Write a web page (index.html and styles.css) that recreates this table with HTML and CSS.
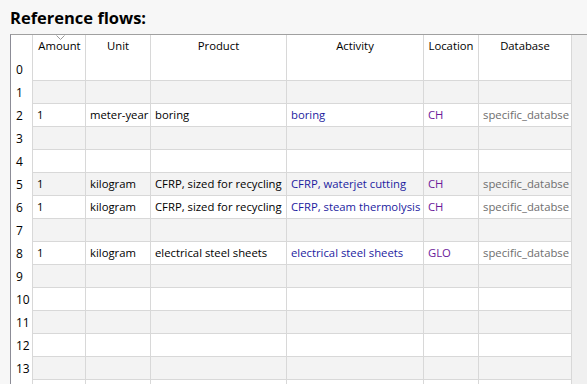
FILE: index.html
```html
<!DOCTYPE html>
<html lang="en">
<head>
    <meta charset="UTF-8">
    <title>Reference flows</title>
    <link rel="stylesheet" href="styles.css">
</head>
<body>
    <h1>Reference flows:</h1>
    <div class="frame">
        <div class="row-header">
            <div class="corner"></div>
            <div class="rh">0</div>
            <div class="rh">1</div>
            <div class="rh">2</div>
            <div class="rh">3</div>
            <div class="rh">4</div>
            <div class="rh">5</div>
            <div class="rh">6</div>
            <div class="rh">7</div>
            <div class="rh">8</div>
            <div class="rh">9</div>
            <div class="rh">10</div>
            <div class="rh">11</div>
            <div class="rh">12</div>
            <div class="rh">13</div>
        </div>
        <div class="grid">
            <div class="th sorted">Amount
                <svg class="sort" width="9" height="5" viewBox="0 0 9 5"><polyline points="0.5,0.5 4.5,4.5 8.5,0.5" fill="none" stroke="#9a9a9a" stroke-width="1"/></svg>
            </div>
            <div class="th">Unit</div>
            <div class="th">Product</div>
            <div class="th">Activity</div>
            <div class="th">Location</div>
            <div class="th">Database</div>

            <div class="td alt"></div><div class="td alt"></div><div class="td alt"></div><div class="td alt"></div><div class="td alt"></div><div class="td alt"></div>

            <div class="td">1</div><div class="td">meter-year</div><div class="td">boring</div><div class="td act">boring</div><div class="td loc">CH</div><div class="td db">specific_databse</div>

            <div class="td alt"></div><div class="td alt"></div><div class="td alt"></div><div class="td alt"></div><div class="td alt"></div><div class="td alt"></div>

            <div class="td"></div><div class="td"></div><div class="td"></div><div class="td"></div><div class="td"></div><div class="td"></div>

            <div class="td alt">1</div><div class="td alt">kilogram</div><div class="td alt">CFRP, sized for recycling</div><div class="td alt act">CFRP, waterjet cutting</div><div class="td alt loc">CH</div><div class="td alt db">specific_databse</div>

            <div class="td">1</div><div class="td">kilogram</div><div class="td">CFRP, sized for recycling</div><div class="td act">CFRP, steam thermolysis</div><div class="td loc">CH</div><div class="td db">specific_databse</div>

            <div class="td alt"></div><div class="td alt"></div><div class="td alt"></div><div class="td alt"></div><div class="td alt"></div><div class="td alt"></div>

            <div class="td">1</div><div class="td">kilogram</div><div class="td">electrical steel sheets</div><div class="td act">electrical steel sheets</div><div class="td loc">GLO</div><div class="td db">specific_databse</div>

            <div class="td alt"></div><div class="td alt"></div><div class="td alt"></div><div class="td alt"></div><div class="td alt"></div><div class="td alt"></div>

            <div class="td"></div><div class="td"></div><div class="td"></div><div class="td"></div><div class="td"></div><div class="td"></div>

            <div class="td alt"></div><div class="td alt"></div><div class="td alt"></div><div class="td alt"></div><div class="td alt"></div><div class="td alt"></div>

            <div class="td"></div><div class="td"></div><div class="td"></div><div class="td"></div><div class="td"></div><div class="td"></div>

            <div class="td alt"></div><div class="td alt"></div><div class="td alt"></div><div class="td alt"></div><div class="td alt"></div><div class="td alt"></div>

            <div class="td"></div><div class="td"></div><div class="td"></div><div class="td"></div><div class="td"></div><div class="td"></div>
        </div>
    </div>
</body>
</html>
```

FILE: styles.css
```css
body {
    margin: 0px;
    padding: 0px;
    height: 384px;
    overflow: hidden;
    background: #f7f7f7;
    font-family: 'Open Sans', 'Liberation Sans', sans-serif;
    font-size: 11.3px;
    color: #000;
}

h1 {
    font-size: 16.5px;
    font-weight: 700;
    margin: 0px;
    padding: 6px 0px 0px 10px;
    height: 28px;
    line-height: 24px;
}

/* テーブル枠 */
.frame {
    display: flex;
    align-items: flex-start;
    margin-left: 10px;
    height: 350px;
    border-top: 1px solid #a0a0a0;
    border-left: 1px solid #8c8c96;
    background: #f0f0f0;
}

/* 行ヘッダ */
.row-header {
    width: 21px;
    flex: 0 0 21px;
    align-self: stretch;
    background: #fff;
    border-right: 1px solid #d8d8d8;
}
.corner {
    height: 23px;
}
.rh {
    height: 23px;
    line-height: 24px;
    padding-left: 5px;
    font-size: 12px;
}

/* セル */
.grid {
    display: grid;
    grid-template-columns: 53px 65px 136px 137px 55px 93px;
    grid-template-rows: 46px;
    grid-auto-rows: 23px;
    align-content: start;
}
.th, .td {
    box-sizing: border-box;
    border-right: 1px solid #d8d8d8;
    border-bottom: 1px solid #d8d8d8;
    background: #fff;
    white-space: nowrap;
    overflow: hidden;
}
.th {
    text-align: center;
    padding-top: 3px;
    line-height: 16px;
    position: relative;
}
.th.sorted {
    padding-left: 1px;
}
.sort {
    position: absolute;
    left: 23px;
    top: 0px;
}
.td {
    padding-left: 4px;
    line-height: 22px;
}
.td.alt {
    background: #f3f3f3;
}
.act {
    color: #1c1ca0;
}
.loc {
    color: #6a1a9a;
}
.db {
    color: #6e6e6e;
}
```
